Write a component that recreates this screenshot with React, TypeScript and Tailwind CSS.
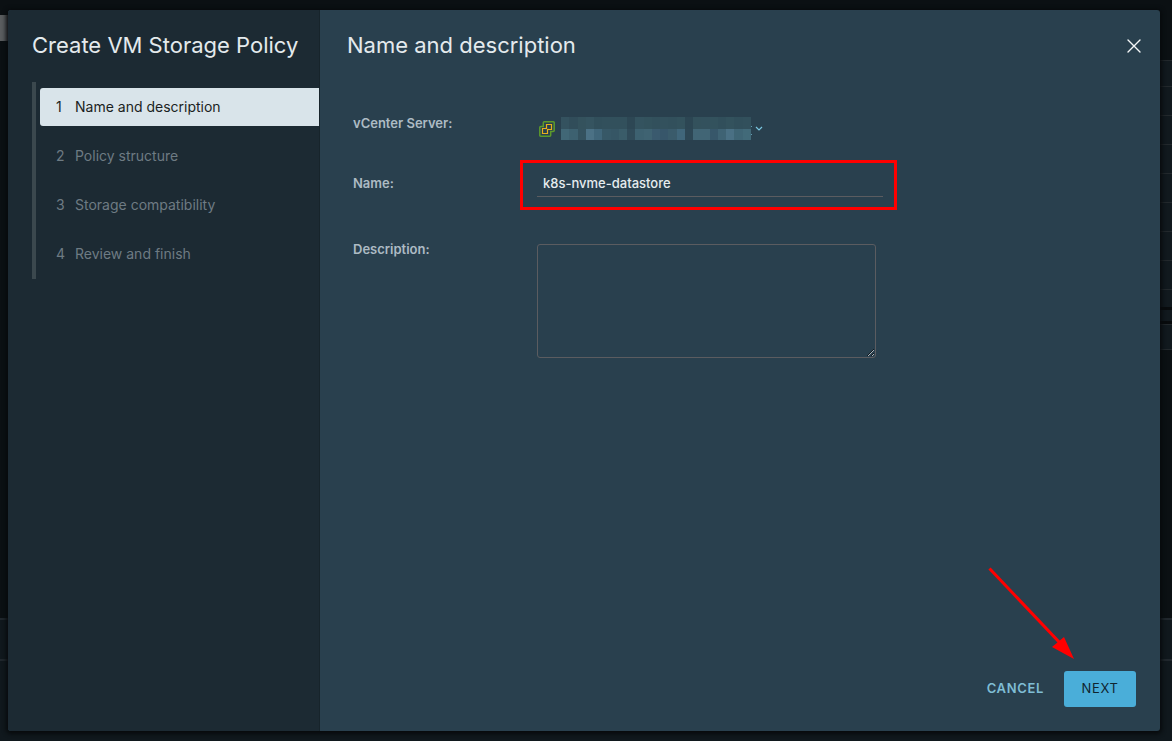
import { ChangeEvent, useState } from "react";
import clsx from "clsx";

const STEPS = [
  "Name and description",
  "Policy structure",
  "Storage compatibility",
  "Review and finish",
];

const MASK_TOP = [
  "#34525f", "#314d5a", "#34525d", "#355460", "#314f5b", "#32505c", "#32505c", "#32505c",
  "#2d4754", "#34535f", "#33525d", "#32505c", "#33515d", "#32505c", "#33525d", "#2c4653",
  "#33515c", "#33515d", "#33525d", "#314f5b", "#33525d", "#314f5b", "#32505c",
];

const MASK_BOTTOM = [
  "#416776", "#3d6170", "#34525f", "#4b7185", "#40667a", "#375867", "#365665", "#3a5c69",
  "#304b59", "#3d6170", "#3f6372", "#3a5a6e", "#37566a", "#3a5b6b", "#40667a", "#2d4755",
  "#416575", "#416575", "#37576a", "#3f6374", "#4a7084", "#3f6575", "#426a79",
];

function VCenterIcon() {
  return (
    <svg width="16" height="16" viewBox="0 0 16 16" fill="none" aria-hidden="true">
      <path
        d="M5.5 .8h9a.7.7 0 0 1 .7.7v8a1 1 0 0 1-1 1h-2.5v3.7a1 1 0 0 1-1 1H1.5a.7.7 0 0 1-.7-.7v-8a1 1 0 0 1 1-1h2.5V1.8a1 1 0 0 1 1-1z"
        stroke="#5c9a2b"
        strokeWidth="1.5"
      />
      <path d="M7.5 3.5h5v5h-5zM3.5 7.5h5v5h-5z" stroke="#e8b01c" strokeWidth="1.2" />
      <path d="M7 7h2v2H7z" fill="#29404e" />
      <path d="M7.5 6.5v1h-1M9.5 8.5h-1v1" stroke="#e8b01c" strokeWidth="1.2" />
    </svg>
  );
}

function MaskedName() {
  return (
    <svg width="192" height="23" viewBox="0 0 192 23" shapeRendering="crispEdges" aria-hidden="true">
      {MASK_TOP.map((fill, i) => (
        <rect key={i} x={i * 8.26} y="0" width="8.3" height="12" fill={fill} />
      ))}
      {MASK_BOTTOM.map((fill, i) => (
        <rect key={i} x={i * 8.26} y="12" width="8.3" height="11" fill={fill} />
      ))}
      <path d="M190 9h1v1h-1zM190 17h1v1h-1z" fill="#5f9db3" />
    </svg>
  );
}

function Backdrop() {
  return (
    <div className="absolute inset-0 flex flex-col justify-between bg-[#0b1013]" aria-hidden="true">
      <div className="flex justify-between">
        <div className="mt-[15px] h-[26px] w-2 bg-[#5a5d5f]" />
        <div className="mt-[60px] w-3 border-y border-[#22282c] bg-[#11191e]">
          <div className="h-[26px] border-b border-[#22282c]" />
          {[0, 1, 2, 3, 4, 5, 6].map((row) => (
            <div key={row} className="h-[29px] border-b border-[#22282c]" />
          ))}
          <div className="h-[17px]" />
          <div className="h-[3px] bg-[#080b0d]" />
          <div className="h-[11px]" />
          <div className="h-[3px] bg-[#080b0d]" />
          <div className="h-[25px] border-t border-[#22282c]" />
        </div>
      </div>
      <div className="h-[123px] border-t-2 border-[#20272d] bg-[#10181d]">
        <div className="h-[41px] border-b-2 border-[#20272d]" />
      </div>
    </div>
  );
}

function Sidebar() {
  return (
    <aside className="w-[312px] shrink-0 border-r border-[#17242b] bg-[#1c2a33] pl-6">
      <h1 className="pt-5 text-[22px] leading-[30px] text-[#e4eaed]">Create VM Storage Policy</h1>
      <ol className="mt-[22px] flex flex-col gap-[11px] border-l-4 border-[#3b484e] py-[6px] pl-1">
        {STEPS.map((step, i) => (
          <li key={step}>
            <button
              type="button"
              aria-current={i === 0 ? "step" : undefined}
              disabled={i > 0}
              className={clsx(
                "flex h-[38px] w-full items-center rounded-l-[3px] pl-4 text-left text-sm",
                i === 0 ? "bg-[#d9e4ea] text-[#1b1f22]" : "text-[#6e7b83]"
              )}
            >
              <span className="w-[19px]">{i + 1}</span>
              {step}
            </button>
          </li>
        ))}
      </ol>
    </aside>
  );
}

export default function App() {
  const [name, setName] = useState("k8s-nvme-datastore");
  const [description, setDescription] = useState("");

  return (
    <div className="relative flex min-h-screen bg-[#0b1013] pt-[10px] pr-3 pb-[10px] pl-2 font-['Inter','Liberation_Sans',sans-serif]">
      <Backdrop />
      <div
        role="dialog"
        aria-label="Create VM Storage Policy"
        className="relative flex flex-1 overflow-hidden rounded-[3px] bg-[#29404e] shadow-[0_1px_4px_2px_#070a0c]"
      >
        <Sidebar />

        <main className="flex min-w-0 flex-1 flex-col pr-6 pb-6 pl-[27px]">
          <header className="flex items-start justify-between pt-5">
            <h2 className="text-[22px] leading-[30px] text-[#e4eaed]">Name and description</h2>
            <button type="button" aria-label="Close" className="-mr-[14px] p-2">
              <svg width="16" height="16" viewBox="0 0 16 16" stroke="#f4f7f8" strokeWidth="1.4" strokeLinecap="round">
                <path d="M2 2l12 12M14 2L2 14" />
              </svg>
            </button>
          </header>

          <form className="flex flex-1 flex-col pt-[44px] pl-[6px] text-[13px] text-[#adbbc4]">
            <div className="flex h-[46px] items-start">
              <label htmlFor="vcenter" className="w-[166px] pt-[7px] font-semibold leading-5">
                vCenter Server:
              </label>
              <button id="vcenter" type="button" className="flex items-center gap-[6px] pt-[11px] pl-5">
                <VCenterIcon />
                <MaskedName />
                <svg width="8" height="6" viewBox="0 0 8 6" fill="none" stroke="#79c6e0" strokeWidth="1.2" className="-ml-1">
                  <path d="M1 1l3 3 3-3" />
                </svg>
              </button>
            </div>

            <div className="mt-2 flex h-[50px] items-stretch">
              <label htmlFor="name" className="w-[167px] pt-[13px] font-semibold leading-5">
                Name:
              </label>
              <div className="w-[377px] border-[3px] border-[#ff0000] pt-2 pr-[11px] pl-[14px]">
                <input
                  id="name"
                  type="text"
                  value={name}
                  onChange={(e: ChangeEvent<HTMLInputElement>) => setName(e.target.value)}
                  className="h-[26px] w-full border-b border-[#5b5c60] bg-transparent px-[6px] pb-[2px] font-medium text-[#e6ecef] outline-none"
                />
              </div>
            </div>

            <div className="mt-[29px] flex items-start">
              <label htmlFor="description" className="w-[184px] font-semibold leading-5">
                Description:
              </label>
              <textarea
                id="description"
                value={description}
                onChange={(e: ChangeEvent<HTMLTextAreaElement>) => setDescription(e.target.value)}
                className="mt-[5px] h-[114px] w-[339px] rounded-[3px] border border-[#5b5c60] bg-transparent p-2 text-[#e6ecef] outline-none"
              />
            </div>
          </form>

          <footer className="relative flex items-center justify-end gap-5 text-[13px] tracking-wider">
            <svg
              className="pointer-events-none absolute right-[62px] bottom-12"
              width="86"
              height="92"
              viewBox="0 0 86 92"
              aria-hidden="true"
            >
              <path d="M1.5 1.5L72 76" stroke="#ff0000" strokeWidth="3" />
              <path d="M86 92L64 80 76 70z" fill="#ff0000" />
            </svg>
            <button type="button" className="font-semibold text-[#7fbdd4]">
              CANCEL
            </button>
            <button type="button" className="h-9 w-[72px] rounded-[3px] bg-[#4aaed9] text-[#10252f]">
              NEXT
            </button>
          </footer>
        </main>
      </div>
    </div>
  );
}
